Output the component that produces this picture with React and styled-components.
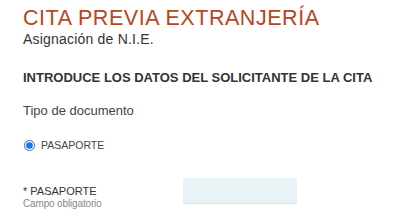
import styled, { createGlobalStyle } from 'styled-components'

const Global = createGlobalStyle`
body {
    margin: 0;
    background: #fff;
    font-family: "Liberation Sans", Arial, sans-serif;
}
`

const Page = styled.div`
box-sizing: border-box;
width: 400px;
height: 219px;
padding: 7px 0 0 23px;
overflow: hidden;
`

const Title = styled.h1`
margin: 0;
font-size: 21.5px;
font-weight: normal;
line-height: 23px;
letter-spacing: 0.55px;
color: #b7461c;
`

const Subtitle = styled.div`
margin-top: 1.5px;
font-size: 14px;
line-height: 14px;
letter-spacing: 0.2px;
color: #333;
`

const Section = styled.h2`
margin: 24.5px 0 0;
font-size: 13px;
font-weight: bold;
line-height: 15px;
color: #333;
`

const Label = styled.div`
margin-top: 18px;
font-size: 13px;
line-height: 15px;
color: #444;
`

const Option = styled.label`
display: flex;
align-items: center;
gap: 6px;
height: 12px;
margin-top: 21px;
font-size: 10.5px;
line-height: 12px;
color: #444;
input {
    margin: 0 0 0 1px;
    width: 11px;
    height: 11px;
    accent-color: #1a73e8;
}
`

const Field = styled.div`
display: flex;
align-items: flex-start;
margin-top: 27px;
`

const FieldName = styled.div`
width: 160px;
display: flex;
flex-direction: column;
margin-top: 6.5px;
.label {
    font-size: 11px;
    line-height: 13px;
    color: #333;
}
.hint {
    font-size: 10px;
    line-height: 12px;
    letter-spacing: -0.15px;
    color: #888;
}
`

const TextInput = styled.input`
box-sizing: border-box;
width: 114px;
height: 26px;
margin: 0;
border: none;
border-bottom: 1px solid #d6e2e8;
background: #e8f3f8;
outline: none;
`

const App = () => {
    return (
        <Page>
            <Global />
            <Title>CITA PREVIA EXTRANJERÍA</Title>
            <Subtitle>Asignación de N.I.E.</Subtitle>
            <Section>INTRODUCE LOS DATOS DEL SOLICITANTE DE LA CITA</Section>
            <Label>Tipo de documento</Label>
            <Option>
                <input type="radio" name="doc" defaultChecked />
                PASAPORTE
            </Option>
            <Field>
                <FieldName>
                    <span className="label">* PASAPORTE</span>
                    <span className="hint">Campo obligatorio</span>
                </FieldName>
                <TextInput type="text" />
            </Field>
        </Page>
    )
}

export default App
